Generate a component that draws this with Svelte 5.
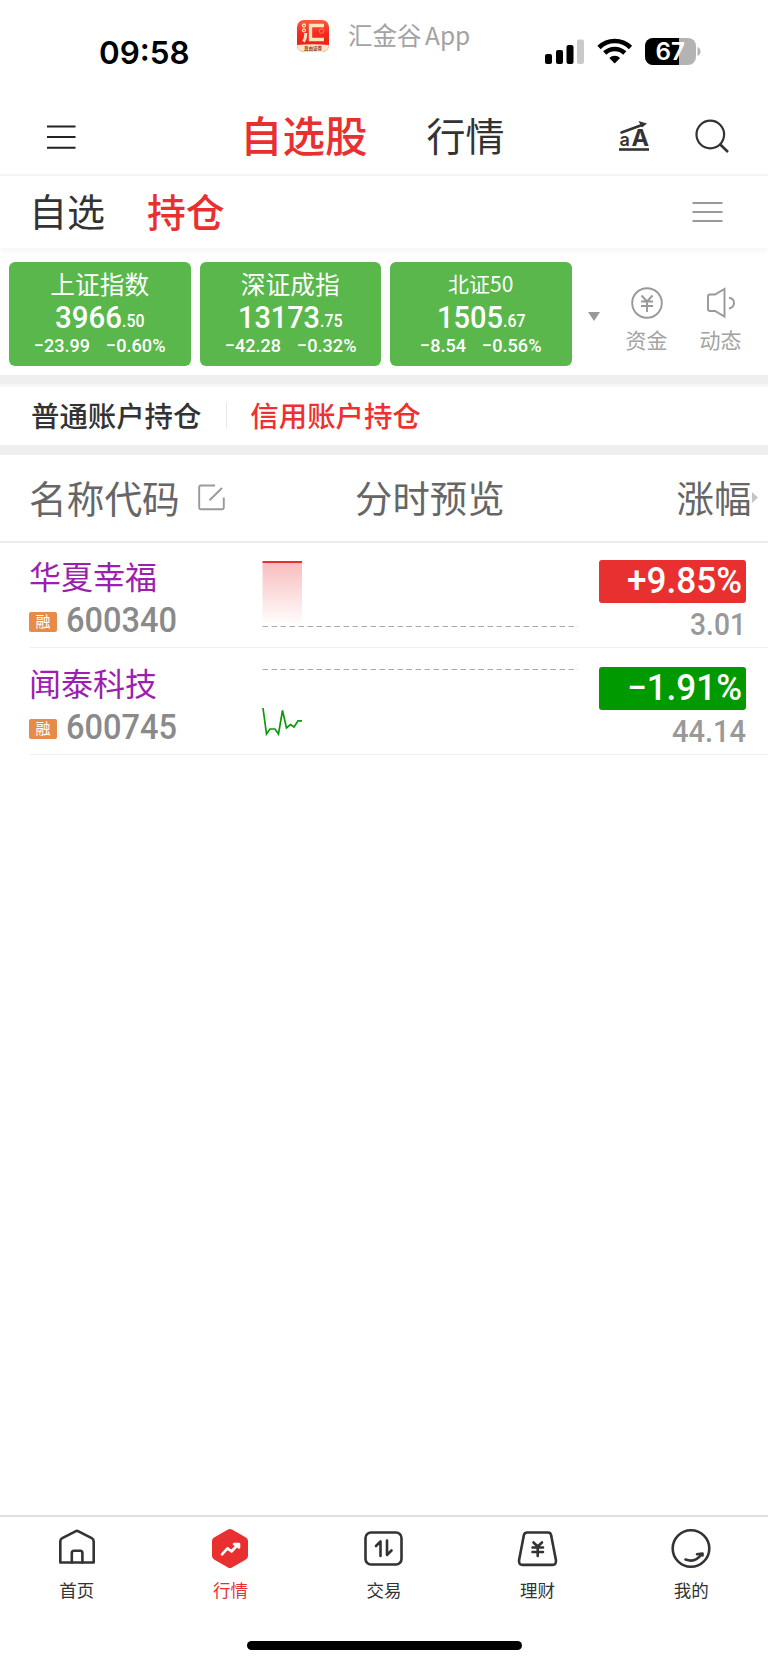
<script lang="ts">
  interface Index {
    name: string;
    small?: boolean;
    int: string;
    intWidth: number;
    dec: string;
    diff: string;
    diffWidth: number;
    pct: string;
  }

  interface Stock {
    name: string;
    code: string;
    pct: string;
    price: string;
    priceWidth: number;
    trend: "up" | "down";
  }

  const indices: Index[] = [
    { name: "上证指数", int: "3966", intWidth: 67, dec: ".50", diff: "−23.99", diffWidth: 56, pct: "−0.60%" },
    { name: "深证成指", int: "13173", intWidth: 82, dec: ".75", diff: "−42.28", diffWidth: 56, pct: "−0.32%" },
    { name: "北证50", small: true, int: "1505", intWidth: 66, dec: ".67", diff: "−8.54", diffWidth: 46, pct: "−0.56%" },
  ];

  const stocks: Stock[] = [
    { name: "华夏幸福", code: "600340", pct: "+9.85%", price: "3.01", priceWidth: 56, trend: "up" },
    { name: "闻泰科技", code: "600745", pct: "−1.91%", price: "44.14", priceWidth: 74, trend: "down" },
  ];

  const tabs = [
    { id: "home", label: "首页" },
    { id: "market", label: "行情" },
    { id: "trade", label: "交易" },
    { id: "wealth", label: "理财" },
    { id: "mine", label: "我的" },
  ];

  let page = $state("watch");
  let group = $state("hold");
  let account = $state("credit");
  let activeTab = $state("market");
</script>

<!-- condensed numerals: squeezed to a fixed advance width -->
{#snippet num(text: string, width: number, size: number, weight: number)}
  <svg class="num" {width} height={size * 0.72} aria-label={text}>
    <text x="0" y={size * 0.715} font-size={size} font-weight={weight} textLength={width} lengthAdjust="spacingAndGlyphs">{text}</text>
  </svg>
{/snippet}

{#snippet tabIcon(id: string)}
  <svg class="tab-icon" width="44" height="44" viewBox="0 0 44 44">
    {#if id === "home"}
      <path d="M5.3 37.5V16.5Q5.3 14.2 7.3 13.2L20.5 6.3Q22 5.5 23.5 6.3L36.7 13.2Q38.7 14.2 38.7 16.5V37.5Z" />
      <path d="M16.8 37.5V28Q16.8 25.7 19 25.7H25.2Q27.4 25.7 27.4 28V37.5" />
    {:else if id === "market"}
      <path class="solid" d="M20 4.5Q22 3.5 24 4.5L37.5 12.2Q40 13.5 40 16V31Q40 33.4 37.5 34.8L24 42.5Q22 43.6 20 42.5L6.5 34.8Q4 33.4 4 31V16Q4 13.5 6.5 12.2Z" />
      <path class="spark" d="M14 29.3L19.5 23.3L23.5 26.5L29.5 20M26 19H31V22.5Z" />
    {:else if id === "trade"}
      <rect x="3.5" y="7.5" width="36" height="32" rx="5.5" />
      <path d="M14 21L18.5 16.5V31M25 15.5V30L29.5 25.5" />
    {:else if id === "wealth"}
      <path d="M11.3 7.5H32.2Q34.5 7.5 35.1 10L39.9 35Q40.5 39.9 36.5 39.9H6.5Q2.5 39.9 3.1 35L7.9 10Q8.5 7.5 11.3 7.5Z" />
      <path d="M17.5 17.5L21.7 21.5L26 17.5M16.5 22.5H27M16.5 27H27M21.7 21.5V31" />
    {:else}
      <circle cx="22" cy="23.5" r="18.3" />
      <path d="M16.5 34.5Q26 38 32 30M28 29.3L33.5 28.5V30.5" />
    {/if}
  </svg>
{/snippet}

<div class="app">
  <div class="status">
    <span class="time">09:58</span>
    <div class="origin">
      <svg width="34" height="34" viewBox="0 0 34 34">
        <defs>
          <linearGradient id="logo" x1="0" y1="0" x2="0" y2="1">
            <stop offset="0" stop-color="#fa6240" />
            <stop offset="0.4" stop-color="#f42c20" />
            <stop offset="1" stop-color="#e91b14" />
          </linearGradient>
          <clipPath id="logo-clip"><rect x="1" y="1" width="32" height="32" rx="7" /></clipPath>
        </defs>
        <g clip-path="url(#logo-clip)">
          <rect width="34" height="34" fill="url(#logo)" />
          <path d="M0 26Q17 24.5 34 26V34H0Z" fill="#fbe3c6" />
        </g>
        <path d="M28 6.5H14.5V20.5H28" fill="none" stroke="#fbe3c0" stroke-width="3.4" />
        <path d="M7.3 22.5Q9.8 20 9.7 14" fill="none" stroke="#fbe3c0" stroke-width="3" />
        <circle cx="8" cy="6.5" r="1.5" fill="none" stroke="#fbe3c0" stroke-width="1.3" />
        <circle cx="8" cy="11.3" r="1.5" fill="none" stroke="#fbe3c0" stroke-width="1.3" />
        <circle cx="25.5" cy="12" r="2.3" fill="none" stroke="#f9805c" stroke-width="1" />
        <text x="17" y="31" text-anchor="middle" font-size="4.5" font-weight="700" fill="#8a3a22">真由证券</text>
      </svg>
      <span>汇金谷 App</span>
    </div>
    <svg class="signals" width="158" height="30" viewBox="0 0 158 30">
      <rect x="0" y="16" width="7" height="10" rx="2" />
      <rect x="11" y="12" width="7" height="14" rx="2" />
      <rect x="21.5" y="7" width="7" height="19" rx="2" />
      <rect x="32" y="1.5" width="7" height="24.5" rx="2" fill="#cacaca" />
      <g fill="none" stroke="#000" stroke-width="4.6">
        <path d="M54 9.5A22.5 22.5 0 0 1 85.5 9.5" />
        <path d="M59.7 15A14.5 14.5 0 0 1 79.8 15" />
      </g>
      <path d="M69.7 25.5L64.3 20A7.8 7.8 0 0 1 75.1 20Z" />
      <clipPath id="battery"><rect x="100" y="0" width="51" height="27" rx="8" /></clipPath>
      <g clip-path="url(#battery)">
        <rect x="100" y="0" width="51" height="27" fill="#b3b3b3" />
        <rect x="100" y="0" width="34" height="27" />
      </g>
      <path d="M152.5 9Q155.5 10.5 155.5 13.5T152.5 18Z" fill="#b3b3b3" />
      <text x="110.5" y="22" textLength="29.5" lengthAdjust="spacingAndGlyphs" font-size="24" font-weight="600" fill="#fff">67</text>
    </svg>
  </div>

  <header class="header">
    <button class="menu" aria-label="菜单">
      <svg width="30" height="26" viewBox="0 0 30 26"><path d="M1 2.5H29.5M1 13H29.5M1 23.8H29.5" stroke="#222" stroke-width="2" /></svg>
    </button>
    <nav class="pages">
      <button class:active={page === "watch"} onclick={() => (page = "watch")}>自选股</button>
      <button class:active={page === "market"} onclick={() => (page = "market")}>行情</button>
    </nav>
    <div class="tools">
      <svg width="32" height="32" viewBox="0 0 32 32">
        <path d="M3.5 12.5L24 5" stroke="#333" stroke-width="2.6" stroke-linecap="round" />
        <path d="M20.5 1L29 3.5L24 7.5Z" fill="#333" />
        <path d="M1 29.5H31" stroke="#333" stroke-width="2.6" />
        <text x="1.5" y="26.2" font-size="18" font-weight="600" fill="#333">a</text>
        <text x="13.500" y="26.2" font-size="23.5" font-weight="700" fill="#333">A</text>
      </svg>
      <svg width="34" height="34" viewBox="0 0 34 34" fill="none" stroke="#333" stroke-width="2.2">
        <circle cx="15.3" cy="15.5" r="13.8" />
        <path d="M25 25.3L33 33" stroke-width="2.6" />
      </svg>
    </div>
  </header>

  <div class="groups">
    <button class:active={group === "watch"} onclick={() => (group = "watch")}>自选</button>
    <button class:active={group === "hold"} onclick={() => (group = "hold")}>持仓</button>
    <svg width="31" height="22" viewBox="0 0 31 22"><path d="M0.5 2H30.5M0.5 11H30.5M0.5 20H30.5" stroke="#999" stroke-width="2.2" /></svg>
  </div>

  <section class="indices">
    {#each indices as index}
      <div class="card">
        <div class="card-name" class:small={index.small}>{index.name}</div>
        <div class="card-value">
          {@render num(index.int, index.intWidth, 31.5, 500)}
          {@render num(index.dec, 22.5, 18.5, 500)}
        </div>
        <div class="card-diff">
          {@render num(index.diff, index.diffWidth, 19, 500)}
          {@render num(index.pct, 59.5, 19, 500)}
        </div>
      </div>
    {/each}
    <svg class="more" width="12" height="9" viewBox="0 0 12 9"><path d="M0 0H12L6 9Z" fill="#999" /></svg>
    <div class="shortcut">
      <svg width="32" height="32" viewBox="0 0 32 32" fill="none" stroke="#999" stroke-width="1.9">
        <circle cx="16" cy="16" r="14.8" />
        <path d="M10.5 8.5L16 14.5L21.5 8.5M10 14.5H22M10 19H22M16 14.5V25" />
      </svg>
      <span>资金</span>
    </div>
    <div class="shortcut sound">
      <svg width="32" height="32" viewBox="0 0 32 32" fill="none" stroke="#999" stroke-width="1.9">
        <path d="M5 7.5H10L19.5 2V29.5L10 24H5Q3 24 3 22V9.5Q3 7.5 5 7.5Z" />
        <path d="M24 10.8Q29 11.5 29 16T24 21.5" />
      </svg>
      <span>动态</span>
    </div>
  </section>

  <div class="accounts">
    <button class:active={account === "normal"} onclick={() => (account = "normal")}>普通账户持仓</button>
    <i></i>
    <button class:active={account === "credit"} onclick={() => (account = "credit")}>信用账户持仓</button>
  </div>

  <div class="thead">
    <span class="col-name">
      名称代码
      <svg width="27" height="27" viewBox="0 0 27 27" fill="none" stroke="#999" stroke-width="1.9">
        <path d="M17 1.5H3Q1.2 1.5 1.2 3.3V23.5Q1.2 25.3 3 25.3H24Q25.8 25.3 25.8 23.5V13.5" />
        <path d="M11.5 16.2L24 4" />
      </svg>
    </span>
    <span class="col-chart">分时预览</span>
    <span class="col-change">涨幅</span>
    <svg class="next" width="6" height="11" viewBox="0 0 6 11"><path d="M0 0L6 5.5L0 11Z" fill="#c4c4c4" /></svg>
  </div>

  {#each stocks as stock}
    <div class="row">
      <div class="info">
        <div class="name">{stock.name}</div>
        <div class="code">
          <span class="badge">融</span>
          {@render num(stock.code, 111, 35.5, 500)}
        </div>
      </div>
      <svg class="chart" width="316" height="72" viewBox="0 0 316 72">
        {#if stock.trend === "up"}
          <defs>
            <linearGradient id="rise" x1="0" y1="0" x2="0" y2="1">
              <stop offset="0" stop-color="#e93030" stop-opacity="0.32" />
              <stop offset="1" stop-color="#e93030" stop-opacity="0" />
            </linearGradient>
          </defs>
          <rect x="0.5" y="2" width="39.5" height="64" fill="url(#rise)" />
          <path d="M0.5 2H40" stroke="#e93030" stroke-width="2" />
          <path class="base" d="M0.5 66.5H316" />
        {:else}
          <path class="base" d="M0.5 2.5H316" />
          <path d="M1 41L4.5 67L8 62H13L16.5 67L20.5 43.5L24.5 61L28.5 57.5L32 60L36 53.8H40" fill="none" stroke="#0a9a0a" stroke-width="1.7" />
        {/if}
      </svg>
      <div class="change">
        <div class="pct {stock.trend}">{@render num(stock.pct, 115, 36, 500)}</div>
        <div class="price">{@render num(stock.price, stock.priceWidth, 31, 500)}</div>
      </div>
    </div>
  {/each}

  <nav class="tabbar">
    {#each tabs as tab}
      <button class:active={activeTab === tab.id} onclick={() => (activeTab = tab.id)}>
        {@render tabIcon(tab.id)}
        <span>{tab.label}</span>
      </button>
    {/each}
  </nav>
  <div class="home-bar"></div>
</div>

<style>
  :global(body) {
    background: #fff;
  }
  .app {
    width: 768px;
    height: 1665px;
    display: flex;
    flex-direction: column;
    overflow: hidden;
    background: #fff;
    color: #333;
    font-family: "Noto Sans CJK SC", sans-serif;
  }
  svg {
    display: block;
    flex: none;
  }
  button {
    border: 0;
    padding: 0;
    background: none;
    color: inherit;
    font: inherit;
    white-space: nowrap;
  }
  .num {
    overflow: visible;
    fill: currentColor;
    font-family: Roboto, sans-serif;
  }

  .status {
    height: 99px;
    display: flex;
    align-items: flex-start;
    box-sizing: border-box;
    padding-left: 99px;
  }
  .time {
    width: 197px;
    margin-top: 34px;
    color: #000;
    font: 600 31.4px/38px Inter, sans-serif;
  }
  .origin {
    display: flex;
    align-items: center;
    gap: 18px;
    width: 249px;
    margin-top: 19px;
    color: #a3a3a3;
    font-size: 24.5px;
    line-height: 32px;
    white-space: nowrap;
    word-spacing: -2px;
  }
  .origin span {
    padding-bottom: 2px;
  }
  .signals {
    margin-top: 38px;
    font-family: Inter, sans-serif;
  }

  .header {
    display: flex;
    align-items: center;
    height: 77px;
    box-sizing: border-box;
    padding: 0 39px 0 46px;
    border-bottom: 2px solid #f7f7f7;
  }
  .menu {
    width: 197px;
  }
  .pages {
    display: flex;
    align-items: center;
    gap: 59px;
    width: 376px;
    margin-left: -3px;
    padding: 0 2px 6px 0;
    font-size: 39px;
    line-height: 50px;
  }
  .pages .active {
    font-size: 42.5px;
    font-weight: 500;
    color: #e93030;
  }
  .tools {
    display: flex;
    align-items: center;
    gap: 45px;
    padding-bottom: 2px;
    font-family: Inter, sans-serif;
  }

  .groups {
    display: flex;
    align-items: center;
    gap: 42px;
    height: 73px;
    box-sizing: border-box;
    padding: 0 45px 0 29px;
    border-bottom: 1px solid #f7f7f7;
    box-shadow: 0 2px 6px rgba(0, 0, 0, 0.04);
    font-size: 38px;
    line-height: 50px;
  }
  .groups button {
    padding-bottom: 5px;
  }
  .groups .active {
    font-size: 38.8px;
    font-weight: 500;
    color: #e93030;
  }
  .groups svg {
    margin-left: auto;
  }

  .indices {
    display: flex;
    align-items: center;
    height: 126px;
    padding: 0 0 0 9px;
    box-sizing: border-box;
  }
  .card {
    width: 181.5px;
    height: 103.5px;
    margin: 4px 9px 0 0;
    display: flex;
    flex-direction: column;
    align-items: center;
    border-radius: 6px;
    background: #5ab74c;
    color: #fff;
  }
  .card-name {
    height: 42px;
    font-size: 24.7px;
    line-height: 42px;
  }
  .card-name.small {
    font-size: 21px;
  }
  .card-value {
    display: flex;
    align-items: flex-end;
    height: 23px;
  }
  .card-diff {
    display: flex;
    gap: 16px;
    margin-top: 11px;
  }
  .more {
    margin: 9px 25px 0 7px;
  }
  .shortcut {
    display: flex;
    flex-direction: column;
    align-items: center;
    gap: 5px;
    width: 42px;
    margin: 16px 31px 0 1px;
    color: #a3a3a3;
    font-size: 21px;
    line-height: 30px;
  }
  .sound {
    margin-right: 0;
  }

  .accounts {
    display: flex;
    align-items: center;
    height: 80px;
    box-sizing: border-box;
    padding: 1px 0 0 31px;
    border-top: 9px solid #efeff1;
    border-bottom: 10px solid #efeff1;
    box-shadow: inset 0 3px #f7f7f9;
    font-size: 28.4px;
    font-weight: 500;
    line-height: 40px;
  }
  .accounts i {
    width: 1px;
    height: 27px;
    margin: 0 23px 0 25px;
    background: #e8e8e8;
  }
  .accounts .active {
    color: #f03030;
  }

  .thead {
    display: flex;
    align-items: center;
    height: 88px;
    box-sizing: border-box;
    padding: 0 0 2px 29px;
    border-bottom: 2px solid #ebebeb;
    color: #666;
    font-size: 37.4px;
    line-height: 50px;
  }
  .col-name {
    display: flex;
    align-items: center;
    gap: 18px;
    width: 326px;
    font-size: 37.7px;
  }
  .col-name svg {
    margin-top: 1px;
  }
  .col-change {
    margin-left: 172px;
  }
  .next {
    margin: 1px 0 0 1px;
  }

  .row {
    display: flex;
    height: 107px;
    box-sizing: border-box;
    margin-left: 29px;
    padding-top: 2px;
    border-bottom: 1px solid #f0f0f0;
  }
  .thead + .row {
    margin-top: -2px;
  }
  .info {
    width: 233px;
  }
  .name {
    height: 66px;
    color: #9c1fb0;
    font-size: 32px;
    line-height: 64px;
  }
  .code {
    display: flex;
    align-items: center;
    gap: 9px;
    height: 22px;
    color: #8a8a8a;
  }
  .badge {
    width: 28px;
    height: 20px;
    margin-top: 3px;
    border-radius: 2px;
    background: #e78c48;
    color: #fff;
    font-size: 15px;
    line-height: 18px;
    text-align: center;
  }
  .chart {
    margin-top: 17px;
  }
  .base {
    stroke: #aaa;
    stroke-width: 1;
    stroke-dasharray: 5.5 3.5;
  }
  .change {
    margin: 17px 0 0 21px;
  }
  .pct {
    display: flex;
    align-items: center;
    justify-content: flex-end;
    width: 147px;
    height: 43px;
    box-sizing: border-box;
    padding: 0 4px 3px 0;
    border-radius: 3px;
    color: #fff;
  }
  .pct.up {
    background: #e93030;
  }
  .pct.down {
    background: #009a00;
  }
  .price {
    display: flex;
    justify-content: flex-end;
    margin-top: 10px;
    color: #999;
  }

  .tabbar {
    display: flex;
    height: 110px;
    margin-top: auto;
    border-top: 2px solid #dedede;
  }
  .tabbar button {
    flex: 1;
    display: flex;
    flex-direction: column;
    align-items: center;
    justify-content: flex-start;
    color: #333;
    font-size: 17.5px;
    line-height: 26px;
  }
  .tabbar .active {
    color: #e93030;
  }
  .tab-icon {
    margin: 8px 0 8px;
    fill: none;
    stroke: #333;
    stroke-width: 2.6;
    stroke-linejoin: round;
    stroke-linecap: round;
  }
  .tab-icon .solid {
    fill: #e93030;
    stroke: none;
  }
  .tab-icon .spark {
    stroke: #fff;
    stroke-width: 2.6;
  }
  .home-bar {
    width: 275px;
    height: 9px;
    margin: 14px auto 15px;
    border-radius: 5px;
    background: #000;
  }
</style>
